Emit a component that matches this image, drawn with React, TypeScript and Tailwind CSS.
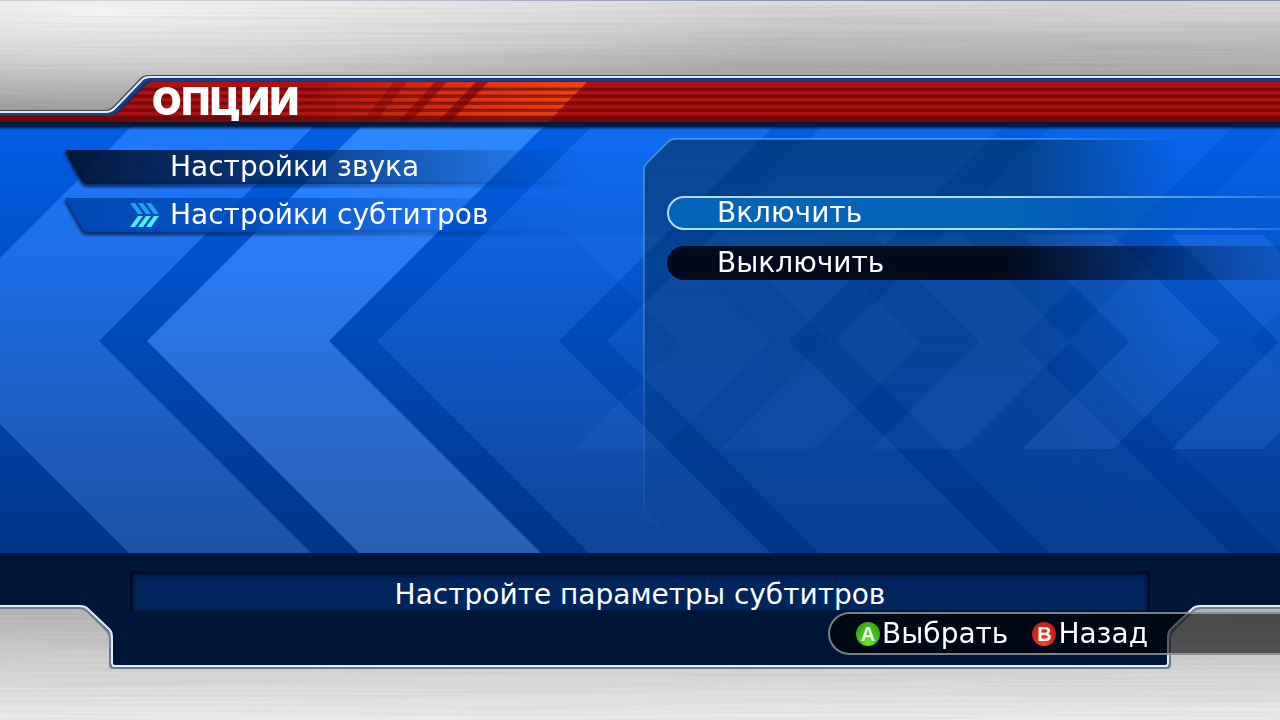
import { ReactNode, useState } from 'react';

const FONT = "font-['DejaVu_Sans','Noto_Sans',sans-serif]";

// chevrons that point left: x of the outer tip, and how bright the filled part is
const LEFT_CHEVRONS = [
  { x: -83, light: 0.115 },
  { x: 147, light: 0.165 },
  { x: 377, light: 0.06 },
  { x: 607, light: 0.045 },
  { x: 837, light: 0.03 },
  { x: 1067, light: 0.02 },
];

const RIGHT_CHEVRONS = [
  { x: 572, light: 0.02 },
  { x: 722, light: 0.025 },
  { x: 872, light: 0.035 },
  { x: 1022, light: 0.05 },
  { x: 1172, light: 0.055 },
];

function BrushedMetal() {
  return (
    <svg className="absolute inset-0 w-full h-full mix-blend-multiply opacity-10" aria-hidden="true">
      <filter id="brushed">
        <feTurbulence type="fractalNoise" baseFrequency="0.003 0.4" numOctaves="3" seed="4" />
        <feColorMatrix values="0 0 0 0 0.3  0 0 0 0 0.3  0 0 0 0 0.3  2.4 0 0 0 -0.8" />
      </filter>
      <rect width="100%" height="100%" filter="url(#brushed)" />
    </svg>
  );
}

function HeaderArt() {
  return (
    <svg className="absolute inset-0 w-full h-full" aria-hidden="true">
      <defs>
        <linearGradient id="flare" gradientUnits="userSpaceOnUse" x1="290" y1="0" x2="590" y2="0">
          <stop offset="0" stopColor="#e83c10" stopOpacity="0" />
          <stop offset="0.6" stopColor="#e83c10" stopOpacity="0.8" />
          <stop offset="1" stopColor="#f04410" />
        </linearGradient>
        <pattern id="stripes" patternUnits="userSpaceOnUse" y="82" width="8" height="7">
          <rect y="5" width="8" height="2" fill="#5c0000" fillOpacity="0.25" />
          <rect y="6" width="8" height="1" fill="#5c0000" fillOpacity="0.5" />
          <rect width="8" height="2" fill="#5c0000" fillOpacity="0.5" />
        </pattern>
        <clipPath id="redBar">
          <path d="M0 115H110Q116 115 120 111L147 84Q149 82 152 82H6000V122H0Z" />
        </clipPath>
      </defs>
      <path d="M0 112H106Q112 112 116 108L140 82Q144 78 150 78H6000V126H0Z" fill="#0c2c6c" />
      <g clipPath="url(#redBar)">
        <rect width="6000" height="126" fill="#ac1212" />
        <path d="M290 122L330 82H587L548 122Z" fill="url(#flare)" />
        <g fill="#900a0a" fillOpacity="0.85">
          <path d="M437 122L476 82H488L450 122Z" />
          <path d="M398 122L435 82H447L410 122Z" fillOpacity="0.7" />
          <path d="M362 122L394 82H407L375 122Z" fillOpacity="0.5" />
        </g>
        <rect y="87" width="6000" height="29" fill="url(#stripes)" />
        <rect y="116" width="6000" height="6" fill="#5c0808" fillOpacity="0.75" />
      </g>
      <rect y="122" width="6000" height="4" fill="#06183c" />
      <path d="M0 111H105Q110 111 114 107L140 80Q143 76 149 76H6000" fill="none" stroke="#404850" strokeWidth="2" />
      <path d="M0 114H107Q113 114 117 110L143 83Q146 80 151 80H6000" fill="none" stroke="#1c3c84" strokeWidth="3" />
      <path d="M0 112H106Q111 112 115 108L141 81Q144 77 150 77H6000" fill="none" stroke="#dcecff" strokeWidth="2" />
    </svg>
  );
}

function ChevronField() {
  return (
    <svg
      className="absolute inset-0 w-full h-full isolate"
      viewBox="0 126 1280 427"
      preserveAspectRatio="xMinYMid slice"
      aria-hidden="true"
    >
      <defs>
        <linearGradient id="sky" x1="0" y1="0" x2="0" y2="1">
          <stop offset="0" stopColor="#005ee6" />
          <stop offset="0.5" stopColor="#0049b8" />
          <stop offset="1" stopColor="#003488" />
        </linearGradient>
        <linearGradient id="drop" x1="0" y1="0" x2="0" y2="1">
          <stop offset="0" stopColor="#02102c" stopOpacity="0.9" />
          <stop offset="1" stopColor="#02102c" stopOpacity="0" />
        </linearGradient>
      </defs>
      <rect y="126" width="1280" height="427" fill="url(#sky)" />
      {LEFT_CHEVRONS.map(({ x, light }) => (
        <path
          key={x}
          className="mix-blend-plus-lighter"
          d={`M${x} 341L${x + 215} 126H${x + 397}L${x + 182} 341L${x + 394} 553H${x + 212}Z`}
          fill="#fff"
          fillOpacity={light}
        />
      ))}
      {RIGHT_CHEVRONS.map(({ x, light }) => (
        <path
          key={x}
          className="mix-blend-plus-lighter"
          d={`M${x} 235H${x + 91}L${x + 198} 342L${x + 91} 449H${x}L${x + 107} 342Z`}
          fill="#fff"
          fillOpacity={light}
        />
      ))}
      <rect y="126" width="1280" height="4" fill="url(#drop)" />
    </svg>
  );
}

function MenuArrows() {
  return (
    <svg width="30" height="24" viewBox="0 0 30 24" aria-hidden="true">
      {[0, 8, 16].map((x) => (
        <g key={x}>
          <path d={`M${x} 0H${x + 5}L${x + 13} 11H${x + 8}Z`} fill="#20a4f0" />
          <path d={`M${x + 8} 13H${x + 13}L${x + 5} 24H${x}Z`} fill="#4cf0ff" />
        </g>
      ))}
    </svg>
  );
}

function MenuItem({ active, onClick, children }: { active: boolean; onClick: () => void; children: ReactNode }) {
  const id = active ? 'plateOn' : 'plateOff';
  return (
    <button
      onClick={onClick}
      aria-current={active}
      className="relative flex items-center w-full h-9 pl-[65px] text-white text-[28px] leading-9 cursor-pointer"
    >
      <svg className="absolute inset-0 w-full h-full overflow-visible" viewBox="0 0 525 36" preserveAspectRatio="none" aria-hidden="true">
        <defs>
          <linearGradient id={id}>
            <stop offset="0" stopColor={active ? '#0044b0' : '#001230'} stopOpacity={active ? 0.95 : 0.92} />
            <stop offset="0.4" stopColor={active ? '#004cc0' : '#042458'} stopOpacity={active ? 0.75 : 0.8} />
            <stop offset="1" stopColor={active ? '#0058d0' : '#003880'} stopOpacity="0" />
          </linearGradient>
          <linearGradient id={id + 'Shadow'}>
            <stop offset="0" stopColor="#001438" stopOpacity="0.9" />
            <stop offset="1" stopColor="#001438" stopOpacity="0" />
          </linearGradient>
          <filter id={id + 'Blur'}>
            <feGaussianBlur stdDeviation="1.5" />
          </filter>
        </defs>
        <path d="M1 3L17 32Q19 36 24 36H525" fill="none" stroke={`url(#${id}Shadow)`} strokeWidth="4" filter={`url(#${id}Blur)`} />
        <path d="M3 1H525V35H22Q19 35 17 32L1 4Q0 1 3 1Z" fill={`url(#${id})`} />
      </svg>
      <span className="relative w-10 shrink-0">{active && <MenuArrows />}</span>
      <span className="relative whitespace-nowrap">{children}</span>
    </button>
  );
}

function OptionItem({ active, onClick, children }: { active: boolean; onClick: () => void; children: ReactNode }) {
  const id = active ? 'pillOn' : 'pillOff';
  return (
    <button
      onClick={onClick}
      aria-pressed={active}
      className="relative flex items-center w-full h-[34px] pl-[50px] text-white text-[28px] leading-8 cursor-pointer"
    >
      <svg className="absolute inset-0 w-full h-full" aria-hidden="true">
        <defs>
          <linearGradient id={id}>
            <stop offset="0" stopColor={active ? '#0464b8' : '#000a1c'} />
            <stop offset="0.5" stopColor={active ? '#0464b8' : '#000a1c'} />
            <stop offset="0.95" stopColor={active ? '#0058d4' : '#001c50'} stopOpacity="0.1" />
          </linearGradient>
          <linearGradient id="pillEdge">
            <stop offset="0" stopColor="#b4dcf8" />
            <stop offset="0.5" stopColor="#b4dcf8" />
            <stop offset="0.95" stopColor="#b4dcf8" stopOpacity="0.1" />
          </linearGradient>
        </defs>
        {active ? (
          <rect x="1" y="1" width="110%" height="32" rx="16" fill={`url(#${id})`} stroke="url(#pillEdge)" strokeWidth="2" />
        ) : (
          <rect width="110%" height="34" rx="17" fill={`url(#${id})`} />
        )}
      </svg>
      <span className="relative">{children}</span>
    </button>
  );
}

function OptionPanelArt() {
  return (
    <svg className="absolute inset-0 w-full h-full" viewBox="0 0 637 392" preserveAspectRatio="none" aria-hidden="true">
      <defs>
        <linearGradient id="panelFade">
          <stop offset="0.6" stopColor="#fff" />
          <stop offset="0.84" stopColor="#000" />
        </linearGradient>
        <linearGradient id="panelFill" x1="0" y1="0" x2="0" y2="1">
          <stop offset="0" stopColor="#04263f" stopOpacity="0.54" />
          <stop offset="0.5" stopColor="#04263f" stopOpacity="0.3" />
          <stop offset="1" stopColor="#04263f" stopOpacity="0" />
        </linearGradient>
        <linearGradient id="panelEdge" x1="0" y1="0" x2="0" y2="1">
          <stop offset="0" stopColor="#8cc0ff" stopOpacity="0.45" />
          <stop offset="1" stopColor="#8cc0ff" stopOpacity="0.04" />
        </linearGradient>
        <mask id="panelMask">
          <rect width="637" height="392" fill="url(#panelFade)" />
        </mask>
      </defs>
      <g mask="url(#panelMask)">
        <path d="M637 1H32Q28 1 25 4L4 25Q1 28 1 32V374L17 392H637Z" fill="url(#panelFill)" />
        <path d="M637 1H32Q28 1 25 4L4 25Q1 28 1 32V374L17 391" fill="none" stroke="url(#panelEdge)" strokeWidth="2" />
      </g>
    </svg>
  );
}

function FooterFrame() {
  return (
    <div className="absolute inset-0 flex items-start" aria-hidden="true">
      <svg className="shrink-0 -scale-x-100" width="130" height="120">
        <FrameCorner />
      </svg>
      <div className="flex-1 h-[116px] bg-[#001638] border-b-2 border-[#6c7c90]">
        <div className="h-full border-b-2 border-[#e4ecf8]" />
      </div>
      <svg className="shrink-0" width="130" height="120">
        <FrameCorner />
      </svg>
    </div>
  );
}

function FrameCorner() {
  return (
    <>
      <path d="M0 0H130V54H50Q45 54 42 57L22 77Q19 80 19 85V113H0Z" fill="#001638" />
      <path d="M130 55H51Q46 55 43 58L23 78Q20 81 20 86V111Q20 115 17 115H0" fill="none" stroke="#6c7c90" strokeWidth="2" />
      <path d="M130 53H50Q45 53 42 56L21 76Q18 79 18 84V110Q18 113 15 113H0" fill="none" stroke="#e4ecf8" strokeWidth="2" />
    </>
  );
}

function PadButton({ letter, tone, children }: { letter: string; tone: string; children: ReactNode }) {
  return (
    <button className="flex items-center gap-0.5 text-white text-[28px] leading-8 whitespace-nowrap cursor-pointer">
      <span
        className={`flex items-center justify-center size-6 rounded-full bg-radial-[at_50%_90%] ${tone} font-['Liberation_Sans',sans-serif] font-bold text-xl leading-6`}
      >
        {letter}
      </span>
      {children}
    </button>
  );
}

const MENU = ['Настройки звука', 'Настройки субтитров'];
const OPTIONS = ['Включить', 'Выключить'];

export default function App() {
  const [section, setSection] = useState(1);
  const [option, setOption] = useState(0);

  return (
    <div className={`min-h-screen flex flex-col overflow-hidden bg-[#001638] ${FONT}`}>
      <header className="relative h-[126px] shrink-0 bg-linear-to-b from-[#dcdcdc] to-[#868686] shadow-[inset_0_1px_0_#8090ac]">
        <div className="absolute inset-0 bg-radial-[ellipse_55%_90%_at_8%_10%] from-white/75 to-transparent" />
        <BrushedMetal />
        <HeaderArt />
        <h1 className="relative pt-[78px] pl-[152px] font-['Inter',sans-serif] font-black text-[38px] leading-[46px] text-white">
          ОПЦИИ
        </h1>
      </header>

      <main className="relative flex-1 grid grid-cols-2">
        <ChevronField />
        <nav className="relative flex flex-col gap-3 pt-[23px] pl-[65px] pr-12">
          {MENU.map((label, i) => (
            <MenuItem key={label} active={i === section} onClick={() => setSection(i)}>
              {label}
            </MenuItem>
          ))}
        </nav>
        <section className="relative mt-3 mb-6 ml-[3px] pt-[58px] pl-6">
          <OptionPanelArt />
          <div className="flex flex-col gap-4">
            {OPTIONS.map((label, i) => (
              <OptionItem key={label} active={i === option} onClick={() => setOption(i)}>
                {label}
              </OptionItem>
            ))}
          </div>
        </section>
      </main>

      <footer className="relative h-[167px] shrink-0 flex flex-col bg-linear-to-b from-[#b4b4b4] from-30% to-[#eeeeee]">
        <BrushedMetal />
        <FooterFrame />
        <p className="relative mt-[18px] mx-[130px] h-[41px] bg-[#00245c] text-center text-[28px] leading-[48px] text-white shadow-[inset_0_4px_4px_#000a20,inset_3px_0_3px_#000a20,inset_-3px_0_3px_#000a20]">
          Настройте параметры субтитров
        </p>
        <div className="relative self-end flex items-center gap-6 h-[43px] pl-[26px] pr-[132px] rounded-l-full border-2 border-r-0 border-[#98a0a8]/80 bg-black/60">
          <PadButton letter="A" tone="from-[#60f020] to-[#2c9010]">Выбрать</PadButton>
          <PadButton letter="B" tone="from-[#ff4028] to-[#b01414]">Назад</PadButton>
        </div>
      </footer>
    </div>
  );
}
